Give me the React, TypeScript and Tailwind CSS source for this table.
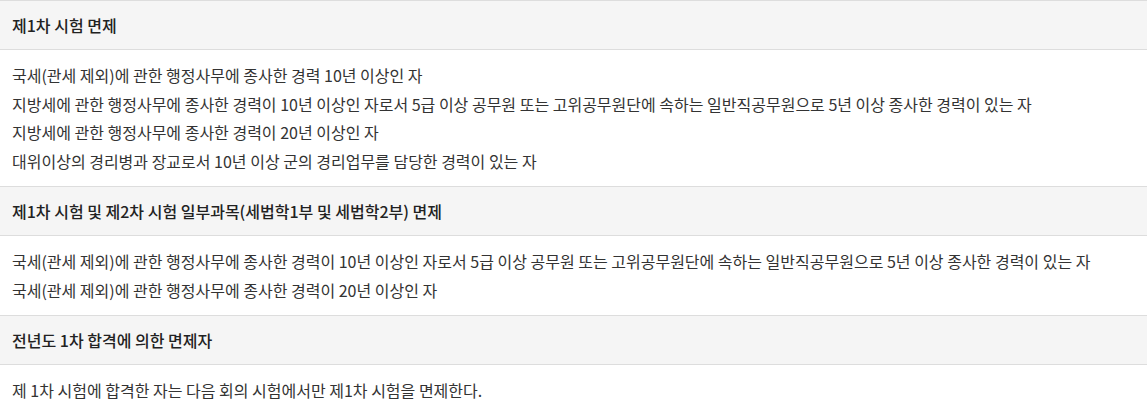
const sections = [
  {
    title: "제1차 시험 면제",
    items: [
      "국세(관세 제외)에 관한 행정사무에 종사한 경력 10년 이상인 자",
      "지방세에 관한 행정사무에 종사한 경력이 10년 이상인 자로서 5급 이상 공무원 또는 고위공무원단에 속하는 일반직공무원으로 5년 이상 종사한 경력이 있는 자",
      "지방세에 관한 행정사무에 종사한 경력이 20년 이상인 자",
      "대위이상의 경리병과 장교로서 10년 이상 군의 경리업무를 담당한 경력이 있는 자",
    ],
  },
  {
    title: "제1차 시험 및 제2차 시험 일부과목(세법학1부 및 세법학2부) 면제",
    items: [
      "국세(관세 제외)에 관한 행정사무에 종사한 경력이 10년 이상인 자로서 5급 이상 공무원 또는 고위공무원단에 속하는 일반직공무원으로 5년 이상 종사한 경력이 있는 자",
      "국세(관세 제외)에 관한 행정사무에 종사한 경력이 20년 이상인 자",
    ],
  },
  {
    title: "전년도 1차 합격에 의한 면제자",
    items: ["제 1차 시험에 합격한 자는 다음 회의 시험에서만 제1차 시험을 면제한다."],
  },
]

export default function App() {
  return (
    <div
      className="w-[1147px] bg-white border-t border-[#dddddd]"
      style={{ fontFamily: '"Noto Sans CJK KR", "Noto Sans", sans-serif' }}
    >
      {sections.map((s) => (
        <div key={s.title}>
          <div className="h-[49px] flex items-center px-3 bg-[#f5f5f5] border-b border-[#dddddd] text-[16px] font-medium text-[#222]">
            {s.title}
          </div>
          <ul className="py-[11px] px-3 border-b border-[#dddddd]">
            {s.items.map((t) => (
              <li key={t} className="text-[16px] leading-[28.5px] text-[#333]">
                {t}
              </li>
            ))}
          </ul>
        </div>
      ))}
    </div>
  )
}
